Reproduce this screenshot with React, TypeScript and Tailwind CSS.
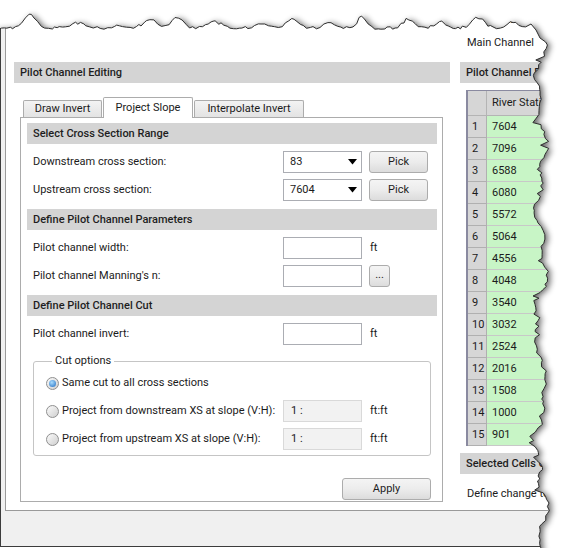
import React from "react";

const stations = [7604, 7096, 6588, 6080, 5572, 5064, 4556, 4048, 3540, 3032, 2524, 2016, 1508, 1000, 901];

// seeded noise so the torn edge is the same every render
function makeRng(seed: number) {
  return () => {
    seed = (seed + 0x6d2b79f5) | 0;
    let t = Math.imul(seed ^ (seed >>> 15), 1 | seed);
    t = (t + Math.imul(t ^ (t >>> 7), 61 | t)) ^ t;
    return ((t ^ (t >>> 14)) >>> 0) / 4294967296;
  };
}

function tornEdge() {
  const rnd = makeRng(7);
  const bumps = [
    [30, 13, 8], [78, 5, 10], [118, 3, 8], [150, 9, 9], [178, 11, 8], [215, 6, 10],
    [262, 4, 9], [292, 10, 8], [330, 5, 9], [362, 12, 6], [408, 9, 7], [440, 6, 8],
    [478, 10, 9], [512, 6, 8],
  ];
  const pts: [number, number][] = [];
  for (let x = -4; x <= 526; x += 2 + rnd() * 2) {
    let y = 28;
    for (const [bx, h, w] of bumps) y -= h * Math.exp(-(((x - bx) / w) ** 2));
    y += (rnd() - 0.5) * 3;
    pts.push([x, y]);
  }
  pts.push([531, 24], [536, 30], [540, 38]);
  for (let y = 42; y <= 560; y += 2 + rnd() * 2.5) {
    let x = 541 + 4 * Math.sin(y / 19) + 3 * Math.sin(y / 7.3 + 1) + (rnd() - 0.5) * 4;
    if (rnd() > 0.88) x -= 5;
    pts.push([x, y]);
  }
  const line = "M" + pts.map(([x, y]) => `${x.toFixed(1)},${y.toFixed(1)}`).join(" L");
  return {
    line,
    inside: line + " L-10,560 Z",
    outside: line + " L600,560 L600,-20 L-10,-20 Z",
  };
}

const edge = tornEdge();

function SectionHeader({ children }: { children: React.ReactNode }) {
  return (
    <div className="flex h-[21px] items-center whitespace-nowrap bg-[#d4d4d4] pl-[6px] font-medium text-[#1e1e1e]">
      {children}
    </div>
  );
}

function TextBox({ disabled, value }: { disabled?: boolean; value?: string }) {
  return (
    <div
      className={`flex h-[22px] w-[79px] items-center border pl-[7px] ${
        disabled ? "border-[#d9d9d9] bg-[#f2f2f2]" : "border-[#abadb3] bg-white"
      }`}
    >
      {value}
    </div>
  );
}

function Combo({ value }: { value: string }) {
  return (
    <div className="flex h-[22px] w-[79px] items-center justify-between border border-[#abadb3] bg-white pl-[6px] pr-[4px]">
      <span>{value}</span>
      <svg width="9" height="6" viewBox="0 0 9 6">
        <polygon points="0,0 9,0 4.5,5.5" fill="#000" />
      </svg>
    </div>
  );
}

function WinButton({ children, className }: { children: React.ReactNode; className: string }) {
  return (
    <button
      className={`flex items-center justify-center rounded-[3px] border border-[#acacac] bg-linear-to-b from-[#f4f4f4] via-[#ececec] to-[#dcdcdc] text-[#1e1e1e] ${className}`}
    >
      {children}
    </button>
  );
}

function Radio({ checked, label }: { checked?: boolean; label: string }) {
  return (
    <div className="flex w-[237px] items-center gap-[3px] whitespace-nowrap">
      <span className="flex h-[13px] w-[13px] shrink-0 items-center justify-center rounded-full border border-[#8f8f8f] bg-linear-to-br from-[#fbfbfb] to-[#cfcfcf]">
        {checked && (
          <span className="h-[7px] w-[7px] rounded-full bg-[radial-gradient(circle_at_40%_35%,#a8dcff,#1f6cc0)]" />
        )}
      </span>
      <span>{label}</span>
    </div>
  );
}

function FieldRow({ label, children }: { label: string; children: React.ReactNode }) {
  return (
    <div className="flex h-[22px] items-center">
      <div className="w-[256px] whitespace-nowrap pl-[6px]">{label}</div>
      {children}
    </div>
  );
}

export default function App() {
  return (
    <div className="relative h-[548px] w-[568px] overflow-hidden bg-white font-[Roboto,sans-serif] text-[11px] leading-[16px] text-[#1b1b1b]">
      <div className="flex h-[547px] flex-col border-b border-l border-[#3c3c3c] bg-[#f0f0f0] pl-[4px]">
        <div className="flex h-[511px] flex-col overflow-hidden border-b border-l border-[#9a9a9a] bg-white">
          {/* peeking toolbar text, mostly torn away */}
          <div className="flex h-[30px] pt-[12px] text-[#333]">
            <span className="ml-[117px]">0</span>
            <span className="ml-[116px]">5</span>
            <span className="ml-[252px]">00</span>
          </div>

          <div className="flex flex-1 pl-[8px]">
            {/* left: editing */}
            <div className="flex w-[436px] shrink-0 flex-col pt-[32px]">
              <SectionHeader>Pilot Channel Editing</SectionHeader>

              <div className="ml-[9px] mt-[14px] flex h-[20px] items-end gap-[1px]">
                <div className="flex h-[17px] w-[79px] items-center justify-center rounded-t-[2px] border border-b-0 border-[#acacac] bg-linear-to-b from-[#f3f3f3] to-[#e3e3e3]">
                  Draw Invert
                </div>
                <div className="relative z-10 -mb-px flex h-[21px] w-[90px] items-center justify-center rounded-t-[2px] border border-b-0 border-[#acacac] bg-white">
                  Project Slope
                </div>
                <div className="flex h-[17px] w-[110px] items-center justify-center rounded-t-[2px] border border-b-0 border-[#acacac] bg-linear-to-b from-[#f3f3f3] to-[#e3e3e3]">
                  Interpolate Invert
                </div>
              </div>

              <div className="ml-[6px] flex h-[385px] w-[423px] flex-col border border-[#acacac] bg-white pl-[6px] pr-[5px]">
                <div className="mt-[5px]">
                  <SectionHeader>Select Cross Section Range</SectionHeader>
                </div>
                <div className="mt-[7px]">
                  <FieldRow label="Downstream cross section:">
                    <Combo value="83" />
                    <WinButton className="ml-[7px] h-[22px] w-[59px]">Pick</WinButton>
                  </FieldRow>
                </div>
                <div className="mt-[6px]">
                  <FieldRow label="Upstream cross section:">
                    <Combo value="7604" />
                    <WinButton className="ml-[7px] h-[22px] w-[59px]">Pick</WinButton>
                  </FieldRow>
                </div>

                <div className="mt-[8px]">
                  <SectionHeader>Define Pilot Channel Parameters</SectionHeader>
                </div>
                <div className="mt-[7px]">
                  <FieldRow label="Pilot channel width:">
                    <TextBox />
                    <span className="ml-[8px]">ft</span>
                  </FieldRow>
                </div>
                <div className="mt-[6px]">
                  <FieldRow label="Pilot channel Manning's n:">
                    <TextBox />
                    <WinButton className="ml-[7px] h-[22px] w-[21px] pb-[4px] leading-none">...</WinButton>
                  </FieldRow>
                </div>

                <div className="mt-[8px]">
                  <SectionHeader>Define Pilot Channel Cut</SectionHeader>
                </div>
                <div className="mt-[7px]">
                  <FieldRow label="Pilot channel invert:">
                    <TextBox />
                    <span className="ml-[8px]">ft</span>
                  </FieldRow>
                </div>

                <fieldset className="mx-[6px] mt-[8px] rounded-[3px] border border-[#c5c5c5] pb-[5px] pl-[12px]">
                  <legend className="ml-[6px] px-[3px] leading-[16px]">Cut options</legend>
                  <div className="mt-[3px] flex h-[22px] items-center">
                    <Radio checked label="Same cut to all cross sections" />
                  </div>
                  <div className="mt-[6px] flex h-[22px] items-center">
                    <Radio label="Project from downstream XS at slope (V:H):" />
                    <TextBox disabled value="1 :" />
                    <span className="ml-[8px]">ft:ft</span>
                  </div>
                  <div className="mt-[6px] flex h-[22px] items-center">
                    <Radio label="Project from upstream XS at slope (V:H):" />
                    <TextBox disabled value="1 :" />
                    <span className="ml-[8px]">ft:ft</span>
                  </div>
                </fieldset>

                <div className="mt-[22px] flex justify-end pr-[6px]">
                  <WinButton className="h-[22px] w-[89px]">Apply</WinButton>
                </div>
              </div>
            </div>

            {/* right: data grid */}
            <div className="ml-[10px] flex w-[300px] shrink-0 flex-col whitespace-nowrap pt-[5px]">
              <div className="pl-[7px]">Main Channel</div>
              <div className="mt-[11px]">
                <SectionHeader>Pilot Channel Data</SectionHeader>
              </div>

              <div className="ml-[6px] mt-[7px] border-l-2 border-t border-[#8a8aa0]">
                <div className="flex h-[25px] border-b border-[#b4b4b4] bg-[#d6d6d6]">
                  <div className="w-[19px] border-r border-[#b4b4b4]" />
                  <div className="flex items-center pl-[5px]">River Station</div>
                </div>
                {stations.map((s, i) => (
                  <div key={s} className="flex h-[22px]">
                    <div className="flex w-[19px] items-center border-b border-r border-[#b0b0b0] bg-[#d6d6d6] pl-[4px]">
                      {i + 1}
                    </div>
                    <div className="flex flex-1 items-center border-b border-[#c8c8c8] bg-[#c8f5c6] pl-[5px]">
                      {s}
                    </div>
                  </div>
                ))}
              </div>

              <div className="mt-[7px]">
                <SectionHeader>Selected Cells Group Edit</SectionHeader>
              </div>
              <div className="mt-[12px] pl-[7px]">Define change to selected cells</div>
            </div>
          </div>
        </div>
      </div>

      {/* torn paper edge over the screenshot */}
      <svg className="pointer-events-none absolute inset-0" width="568" height="548" viewBox="0 0 568 548">
        <defs>
          <clipPath id="outside">
            <path d={edge.outside} />
          </clipPath>
          <filter id="soft" x="-10%" y="-10%" width="120%" height="120%">
            <feGaussianBlur stdDeviation="3.2" />
          </filter>
        </defs>
        <g clipPath="url(#outside)">
          <rect x="0" y="0" width="568" height="548" fill="#fff" />
          <path d={edge.inside} fill="#000" opacity="0.6" filter="url(#soft)" transform="translate(3,1)" />
        </g>
        <path d={edge.line} fill="none" stroke="#2e2e2e" strokeWidth="1" />
      </svg>
    </div>
  );
}
